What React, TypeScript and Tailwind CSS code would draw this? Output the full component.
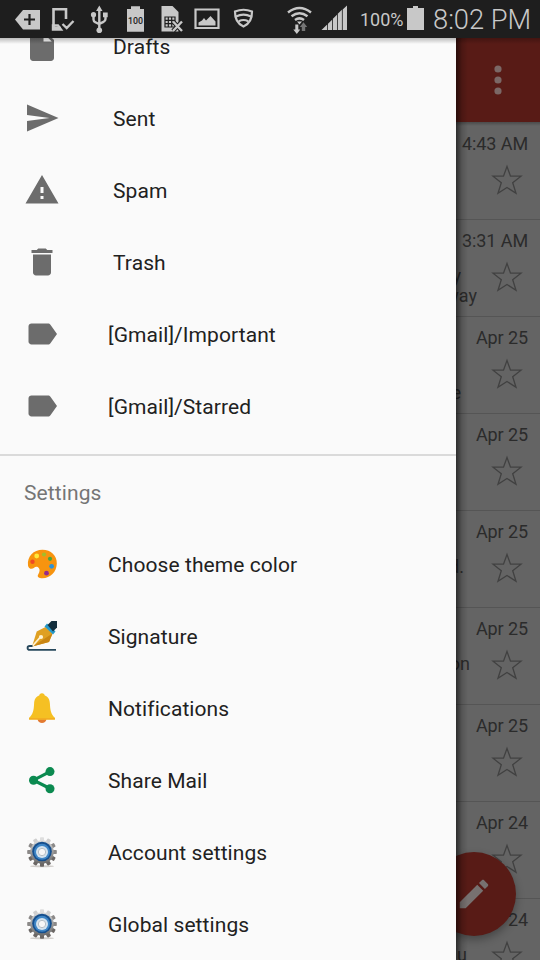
import type { ReactNode } from "react";

const GLYPHS = {
  file: "M6 2c-1.1 0-2 .9-2 2v16c0 1.1.9 2 2 2h12c1.1 0 2-.9 2-2V8l-6-6H6zm7 7V3.5L18.5 9H13z",
  send: "M2.01 21L23 12 2.01 3v7L17 12 2.01 14z",
  warning: "M1 21h22L12 2 1 21zm12-3h-2v-2h2v2zm0-4h-2v-4h2v4z",
  trash: "M6 19c0 1.1.9 2 2 2h8c1.1 0 2-.9 2-2V7H6v12zM19 4h-3.5l-1-1h-5l-1 1H5v2h14V4z",
  label: "M17.63 5.84C17.27 5.33 16.67 5 16 5L5 5.01C3.9 5.01 3 5.9 3 7v10c0 1.1.9 1.99 2 1.99L16 19c.67 0 1.27-.33 1.63-.84L22 12l-4.37-6.16z",
};

function Glyph({ d }: { d: string }) {
  return (
    <svg viewBox="0 0 24 24" className="size-9 fill-[#6c6c6c]">
      <path d={d} />
    </svg>
  );
}

function Art({ children }: { children: ReactNode }) {
  return (
    <svg viewBox="0 0 36 36" className="size-9">
      {children}
    </svg>
  );
}

function Palette() {
  return (
    <Art>
      <path
        d="M4 19.500C3 10.500 9.500 3.800 18.500 3.800c8.500 0 14.500 5.800 14.300 13.700-.2 8.500-6.500 14.700-14.300 14.700-3.500 0-5.800-1.400-4.300-3.800 1.700-2.600 1.800-4.800.6-6.400-1.400-1.900-3.600-1.500-5 0-1.300 1.400-5.300 1.400-5.800-2.500z"
        fill="#f7940f"
      />
      <circle cx="8.500" cy="15.700" r="2.200" fill="#ef4a25" />
      <circle cx="12.700" cy="10" r="2.400" fill="#ffe93b" />
      <circle cx="20" cy="8.500" r="2.100" fill="#a3bd2a" />
      <circle cx="26" cy="12.800" r="2.100" fill="#4ba53c" />
      <circle cx="27.600" cy="20.300" r="2.400" fill="#2e93d8" />
      <circle cx="22.500" cy="27.200" r="2.400" fill="#942a8c" />
    </Art>
  );
}

function Pen() {
  return (
    <Art>
      <path d="M8 28.500L12.700 13.500 21.500 9l7 6.500-3.500 8.500z" fill="#dfa022" />
      <path d="M8.500 28.500L28.500 15.500 25 24z" fill="#c98512" />
      <path d="M8.500 28l7.500-8.500" stroke="#fff3d2" strokeWidth="1.800" />
      <circle cx="17" cy="19" r="2.100" fill="#fff3d2" />
      <path d="M20.500 8.500l2.500-3 8.500 8-2.500 3z" fill="#2699c9" />
      <path d="M23.500 7L27.500 3H33v6.500l-4 4z" fill="#132f3d" />
      <path d="M8.500 28H5.800c-3 0-3 3.800 0 3.800H32" fill="none" stroke="#27485c" strokeWidth="1.800" />
    </Art>
  );
}

function Bell() {
  return (
    <Art>
      <path d="M13.500 29h9c-.5 5.300-8.500 5.300-9 0z" fill="#e37a31" />
      <path
        d="M18 3.200c1.700 0 2.700 1 2.800 2.400 3.500 1.200 4.900 4.200 5.100 7.900.3 6.500 1 11 5 14.200v1.900H5.100v-1.900c4-3.200 4.700-7.700 5-14.200.2-3.700 1.600-6.700 5.100-7.900.1-1.400 1.100-2.400 2.800-2.400z"
        fill="#f5c023"
      />
      <path d="M5.100 28h25.800v1.600H5.100z" fill="#f3ad22" />
    </Art>
  );
}

function Share() {
  return (
    <Art>
      <path d="M26 9.600L9.500 18.200 26 26.500" fill="none" stroke="#0b8a50" strokeWidth="3.200" />
      <circle cx="26" cy="9.600" r="4.500" fill="#0b8a50" />
      <circle cx="9.500" cy="18.200" r="4.500" fill="#0b8a50" />
      <circle cx="26" cy="26.700" r="4.500" fill="#0b8a50" />
    </Art>
  );
}

const TEETH = [0, 30, 60, 90, 120, 150, 180, 210, 240, 270, 300, 330];

function Gear() {
  return (
    <Art>
      <defs>
        <linearGradient id="steel" x1="0" y1="3" x2="0" y2="33" gradientUnits="userSpaceOnUse">
          <stop offset="0" stopColor="#f1f1f1" />
          <stop offset=".45" stopColor="#a2a2a2" />
          <stop offset="1" stopColor="#5d5d5d" />
        </linearGradient>
      </defs>
      <ellipse cx="18" cy="32.300" rx="12" ry="1" fill="#d0cdca" />
      {TEETH.map((a) => {
        const shade = a === 0 ? "#dedede" : a === 30 || a === 330 ? "#cfcfcf" : a > 90 && a < 270 ? "#6b6765" : "#8b8988";
        return (
          <rect key={a} x="16" y="3.200" width="4" height="5" rx=".8" fill={shade} transform={`rotate(${a} 18 18)`} />
        );
      })}
      <circle cx="18" cy="18" r="11.800" fill="url(#steel)" />
      <circle cx="18" cy="17.500" r="9.800" fill="#164f8d" />
      <circle cx="18" cy="17.800" r="8" fill="#3f86c6" />
      <circle cx="18" cy="18" r="6" fill="#d6e4ef" />
      <circle cx="18" cy="18" r="3.700" fill="#f7f7f7" stroke="#b7bfc5" strokeWidth="1" />
    </Art>
  );
}

function Item({ icon, label, inset = false }: { icon: ReactNode; label: string; inset?: boolean }) {
  return (
    <li className="flex h-[72px] shrink-0 items-center pl-6">
      {icon}
      <span className={`${inset ? "ml-[53px]" : "ml-12"} mt-0.5 text-[21px] leading-6 tracking-[0.08px] text-[#212121]`}>{label}</span>
    </li>
  );
}

function StatusIcon({ x, w, className, children }: { x: number; w: number; className?: string; children: ReactNode }) {
  return (
    <svg viewBox={`${x} 0 ${w} 38`} width={w} height="38" className={`shrink-0 ${className ?? ""}`} fill="#c8c8c8">
      {children}
    </svg>
  );
}

function StatusBar() {
  return (
    <header className="flex h-[38px] shrink-0 items-center bg-[#1e1e1e] pl-[14px] text-[#c8c8c8]">
      <StatusIcon x={14} w={27}>
        <path d="M15 19.500l8-9.500h17v19.500H23z" />
        <path d="M29.500 14v11M24 19.500h11" stroke="#1e1e1e" strokeWidth="2.200" />
      </StatusIcon>
      <StatusIcon x={51} w={24} className="ml-[10px]">
        <path d="M66 19V9.200H53.500V28H61" fill="none" stroke="#c8c8c8" strokeWidth="2.600" />
        <path d="M53 25.500h5l3 4h-8zM62.500 24l4.200 4 6.800-7" fill="none" stroke="#c8c8c8" strokeWidth="2.400" />
      </StatusIcon>
      <StatusIcon x={90} w={19} className="ml-[15px]">
        <path d="M99.300 9v22M93.500 15v4.500q0 2 2 2.800l3.800 2M105.500 15v4q0 2-2 2.800l-4.200 2" fill="none" stroke="#c8c8c8" strokeWidth="2.400" />
        <path d="M99.300 5.500l3.200 5.500h-6.400zM103 12.500h4.700v4.700H103z" />
        <circle cx="93.500" cy="14.700" r="2.600" />
        <circle cx="99.300" cy="30.200" r="2.800" />
      </StatusIcon>
      <StatusIcon x={126} w={19} className="ml-[17px]">
        <path d="M127 9h4V6.300h9V9h4v22.800h-17z" />
        <text x="135.500" y="23.500" textAnchor="middle" fontSize="9.500" textLength="15" lengthAdjust="spacingAndGlyphs" fontWeight="500" fill="#1e1e1e">100</text>
      </StatusIcon>
      <StatusIcon x={160} w={24} className="ml-[15px]">
        <path d="M161.500 6h11l6 6v19.500h-17z" />
        <path d="M165 17h10v10h-10zM168.300 17v10M171.700 17v10M165 20.300h10M165 23.700h10" fill="none" stroke="#1e1e1e" strokeWidth="1.200" />
        <path d="M173 21.500l9 9.500M182 21.500l-9 9.500" stroke="#1e1e1e" strokeWidth="4.400" />
        <path d="M173 21.500l9 9.500M182 21.500l-9 9.500" stroke="#c8c8c8" strokeWidth="2.400" />
      </StatusIcon>
      <StatusIcon x={194} w={26} className="ml-[10px]">
        <path d="M195.500 9.500h23v18.500h-23z" fill="none" stroke="#c8c8c8" strokeWidth="2.200" />
        <path d="M198.500 25.500v-3l3.500-2 2-2.500 2 2.500 4.500-4.500 5 5.500v4z" />
      </StatusIcon>
      <StatusIcon x={233} w={21} className="ml-[13px]">
        <path d="M235 11.500q8.500-3.500 17 0c.2 7.500-3 12.500-8.500 15C238 24 234.800 19 235 11.500z" fill="none" stroke="#c8c8c8" strokeWidth="2.200" />
        <path d="M236 16.500q7.500-3.800 15 0M238.800 21.300q4.700-2.600 9.400 0" fill="none" stroke="#c8c8c8" strokeWidth="2.200" />
      </StatusIcon>
      <StatusIcon x={286} w={27} className="ml-[32px]">
        <path d="M288 12.500q11.500-9 23 0M291.500 16.300q8-6 16 0M295 20q4.500-3.300 9 0" fill="none" stroke="#c8c8c8" strokeWidth="2.500" />
        <path d="M297 21.500h5l-2.500 3zM295.300 24.500h3v5h2l-3.500 4.500-3.500-4.500h2z" />
        <path d="M301.800 31v-4h-2l3.700-4.700 3.700 4.700h-2v4z" fill="#747474" />
      </StatusIcon>
      <StatusIcon x={321} w={27} className="ml-[8px]">
        <path d="M321.500 30l5.700-5.500V30zM328 23.700l4.100-4V30H328zM332.900 18.700l4.100-4V30h-4.100zM337.800 13.700l4.100-4V30h-4.100zM342.700 9.500l4.300-4V30h-4.300z" />
      </StatusIcon>
      <span className="ml-3 mt-0.5 w-[47px] text-[18px] leading-6">100%</span>
      <StatusIcon x={407} w={17}>
        <path d="M407 8h6V6h5v2h6v22h-17z" />
      </StatusIcon>
      <span className="ml-[9px] mt-px text-[27.300px] font-light leading-8 whitespace-nowrap">8:02 PM</span>
    </header>
  );
}

type Mail = { date: string; first?: string; second?: string; edge?: string };

const MAILS: Mail[] = [
  { date: "4:43 AM" },
  { date: "3:31 AM", first: "y", second: "way" },
  { date: "Apr 25", second: "e" },
  { date: "Apr 25" },
  { date: "Apr 25", first: "d.", edge: "w-2" },
  { date: "Apr 25", first: "on", edge: "w-3.5" },
  { date: "Apr 25" },
  { date: "Apr 24" },
  { date: "Apr 24", first: "u", edge: "w-[11px]" },
];

function MailRow({ date, first, second, edge = "w-[5px]" }: Mail) {
  return (
    <li className="flex h-[97px] shrink-0 flex-col border-b border-[#555] text-[18px] leading-5 text-[#2b2b2b]">
      <time className="mr-3 mt-[11px] self-end whitespace-nowrap tracking-[-0.1px]">{date}</time>
      <div className="mt-[15px] flex justify-between">
        <div className="flex flex-col">
          <span className={`flex h-5 justify-end overflow-hidden ${edge}`}>{first}</span>
          <span className={`flex h-5 justify-end overflow-hidden ${second === "way" ? "w-[21px]" : "w-[5px]"}`}>{second}</span>
        </div>
        <svg viewBox="0 0 32 32" className="-mt-[5px] mr-[17px] size-8" fill="none" stroke="#414141" strokeWidth="1.300">
          <path d="M16 2.500l3.500 9.700H30l-8.300 6.600 3.300 10.400L16 23.500 7 29.200 10.300 18.800 2 12.200h10.500z" />
        </svg>
      </div>
    </li>
  );
}

export default function App() {
  return (
    <div className="flex h-[960px] w-[540px] flex-col overflow-hidden bg-[#646464] font-['Roboto',sans-serif]">
      <StatusBar />
      <div className="relative flex h-[922px]">
        <nav className="h-full w-[456px] shrink-0 overflow-hidden bg-[#fafafa]">
          <ul className="-mt-7 flex flex-col">
            <Item inset icon={<Glyph d={GLYPHS.file} />} label="Drafts" />
            <Item inset icon={<Glyph d={GLYPHS.send} />} label="Sent" />
            <Item inset icon={<Glyph d={GLYPHS.warning} />} label="Spam" />
            <Item inset icon={<Glyph d={GLYPHS.trash} />} label="Trash" />
            <Item icon={<Glyph d={GLYPHS.label} />} label="[Gmail]/Important" />
            <Item icon={<Glyph d={GLYPHS.label} />} label="[Gmail]/Starred" />
          </ul>
          <section className="mt-3 border-t-2 border-[#dadada]">
            <h2 className="flex h-[72px] items-center pl-6 pt-1 text-[21px] tracking-[0.1px] text-[#757575]">Settings</h2>
            <ul className="flex flex-col">
              <Item icon={<Palette />} label="Choose theme color" />
              <Item icon={<Pen />} label="Signature" />
              <Item icon={<Bell />} label="Notifications" />
              <Item icon={<Share />} label="Share Mail" />
              <Item icon={<Gear />} label="Account settings" />
              <Item icon={<Gear />} label="Global settings" />
            </ul>
          </section>
        </nav>
        <main className="relative flex h-full w-[84px] flex-col overflow-hidden bg-[#646464]">
          <div className="flex h-[84px] shrink-0 items-center justify-center bg-[#581b16]">
            <svg viewBox="0 0 8 30" className="h-[30px] w-2 fill-[#7b6866]">
              <circle cx="4" cy="4" r="3.600" />
              <circle cx="4" cy="15" r="3.600" />
              <circle cx="4" cy="26" r="3.600" />
            </svg>
          </div>
          <ul className="flex flex-col pt-px">
            {MAILS.map((mail, i) => (
              <MailRow key={i} {...mail} />
            ))}
          </ul>
          <div className="absolute left-0 top-[84px] h-1 w-full bg-linear-to-b from-black/25 to-transparent" />
          <button className="absolute -left-6 top-[814px] flex size-[84px] items-center justify-center rounded-full bg-[#581b16] shadow-[0_4px_8px_rgba(0,0,0,.3)]">
            <svg viewBox="0 0 24 24" className="size-[38px] fill-[#777170]">
              <path d="M3 17.250V21h3.750L17.810 9.940l-3.750-3.750L3 17.250zM20.710 7.040c.39-.39.39-1.020 0-1.410l-2.340-2.340c-.39-.39-1.020-.39-1.410 0l-1.830 1.830 3.750 3.750 1.830-1.830z" />
            </svg>
          </button>
          <div className="absolute inset-y-0 left-0 w-3 bg-linear-to-r from-black/55 via-black/15 to-transparent" />
        </main>
        <div className="absolute inset-x-0 top-0 h-1.5 bg-linear-to-b from-black/25 to-transparent" />
      </div>
    </div>
  );
}
